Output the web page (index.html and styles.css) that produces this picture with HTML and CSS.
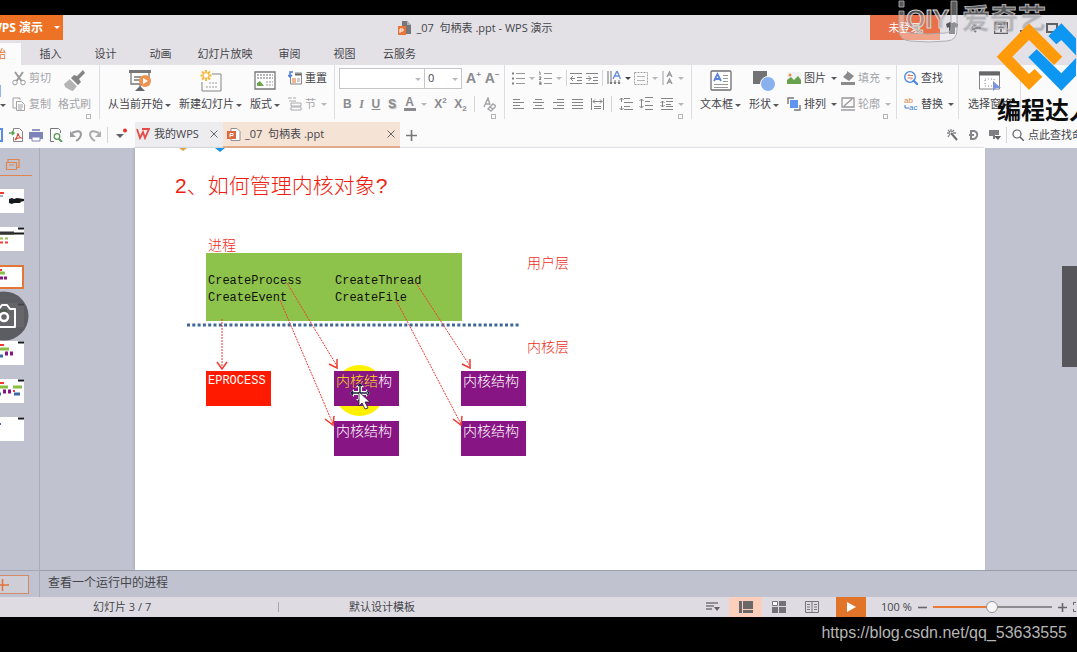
FILE: index.html
```html
<!DOCTYPE html>
<html lang="zh-CN">
<head>
<meta charset="utf-8">
<title>_07 句柄表 .ppt - WPS 演示</title>
<link rel="stylesheet" href="styles.css">
</head>
<body>
<header class="titlebar">
  <button class="brand"><span>WPS 演示</span><i class="caret"></i></button>
  <div class="doc-title">
    <svg width="13" height="14" viewBox="0 0 13 14"><path d="M4 0h5l4 4v9H6V5H4z" fill="#77767b"/><path d="M9 0v4h4z" fill="#b5b4b8"/><rect y="5" width="8" height="9" fill="#e8743a"/><path d="M2 12V8h3v2H2" fill="none" stroke="#fff"/></svg>
    <span>_07&nbsp; 句柄表 .ppt - WPS 演示</span>
  </div>
  <div class="window-tools">
    <button class="login">未登录</button>
    <button class="tool" aria-label="皮肤"><svg width="12" height="12" viewBox="0 0 12 12"><path d="M0 2l4-2q2 2 4 0l4 2-1 4-2-1v7H3V5L1 6z" fill="#55565a"/></svg></button>
    <button class="tool" aria-label="反馈"><svg width="12" height="12" viewBox="0 0 12 12"><path d="M11 6H3M6 2L2 6l4 4" fill="none" stroke="#77777c" stroke-width="2"/></svg></button>
    <button class="tool" aria-label="功能区"><svg width="14" height="12" viewBox="0 0 14 12"><path d="M.5.500h13v11H.5zM0 2h14M7 10V4M4 7l3-3 3 3" fill="none" stroke="#606065" stroke-width="1.500"/></svg></button>
    <button class="tool" aria-label="最小化"><svg width="14" height="12" viewBox="0 0 14 12"><path d="M0 9h11" stroke="#606065" stroke-width="2"/></svg></button>
    <button class="tool" aria-label="还原"><svg width="12" height="12" viewBox="0 0 12 12"><path d="M1 2h10v8H1z" fill="none" stroke="#606065" stroke-width="2"/></svg></button>
  </div>
</header>
<nav class="menu-tabs">
  <button class="menu active">开始</button>
  <button class="menu">插入</button>
  <button class="menu">设计</button>
  <button class="menu">动画</button>
  <button class="menu wide">幻灯片放映</button>
  <button class="menu">审阅</button>
  <button class="menu">视图</button>
  <button class="menu">云服务</button>
</nav>

<section class="ribbon">
  <div class="group clipboard">
    <button class="paste" aria-label="粘贴"><svg width="2" height="12"><rect y="0" width="1" height="12" fill="#8fb6f0"/></svg><i class="caret"></i></button>
    <div class="stack">
      <button class="small dim"><svg width="14" height="15" viewBox="0 0 14 15"><g fill="none" stroke="#9b9b9e"><path d="M3 1l6.500 9M11 1L4.500 10" stroke-width="2"/><circle cx="3" cy="11.500" r="2.300"/><circle cx="11" cy="11.500" r="2.300"/></g></svg><span>剪切</span></button>
      <button class="small dim"><svg width="14" height="15" viewBox="0 0 14 15"><path d="M4 11H1V1h7v2M4.500 4.500h5l3 3v6h-8zM6 8h5M6 10h5M6 12h4" fill="none" stroke="#a3a3a6"/></svg><span>复制</span></button>
    </div>
    <button class="large dim"><svg width="22" height="22" viewBox="0 0 22 22"><path d="M19 0l2 3-6 6 2 3-3 3-7-7 3-3 3 1z" fill="#858585"/><path d="M6 9l7 7-4 5-3-1-5-3-1-3z" fill="#b4b4b5"/><path d="M6 9l7 7" stroke="#f5f5f5"/></svg><span>格式刷</span></button>
    <i class="launcher"></i>
  </div>
  <div class="group slides">
    <button class="large"><svg width="22" height="22" viewBox="0 0 22 22"><path d="M0 1.500h22" stroke="#77777a" stroke-width="3"/><path d="M2 3v11h18V3M5 7h8M5 10h6M11 14v4" fill="none" stroke="#77777a" stroke-width="1.300"/><path d="M11 16l5 5H6z" fill="#66666a"/><circle cx="16" cy="11" r="6" fill="#f0924f"/><path d="M14 8v6l5-3z" fill="#fff"/></svg><span>从当前开始<i class="caret"></i></span></button>
    <button class="large"><svg width="22" height="22" viewBox="0 0 22 22"><path d="M12 4h9v17H2v-9" fill="none" stroke="#858588"/><path d="M9 13h9M6 17h11" stroke="#9c9ca0" stroke-dasharray="2 1"/><path d="M6 0v11M.500 5.500h11M2 1.500l8 8M10 1.500l-8 8" stroke="#f5b83d" stroke-width="2"/><circle cx="6" cy="5.500" r="2.300" fill="#fff"/></svg><span>新建幻灯片<i class="caret"></i></span></button>
    <button class="large"><svg width="22" height="22" viewBox="0 0 22 22"><path d="M1 2h20v17H1z" fill="#fff" stroke="#77777a" stroke-width="1.300"/><path d="M3 5h16M3 8h16" stroke="#b5b5b8" stroke-width="2" stroke-dasharray="2 1"/><path d="M3 16v-3l3-2 4 5z" fill="#69a64d"/><path d="M12 12h7M12 15h7" stroke="#909095" stroke-dasharray="2 1"/></svg><span>版式<i class="caret"></i></span></button>
    <div class="stack">
      <button class="small"><svg width="14" height="14" viewBox="0 0 14 14"><path d="M2.500 5v8h11V2H7" fill="#fff" stroke="#85858a"/><path d="M7 3.500h6" stroke="#666" stroke-width="2"/><path d="M4 7h4v5H4z" fill="#f1b68f"/><path d="M9 8h3M9 10h3" stroke="#999"/><path d="M5 1H2v5M0 4l2 2 2-2" fill="none" stroke="#4d7edb" stroke-width="1.500"/></svg><span>重置</span></button>
      <button class="small dim"><svg width="14" height="14" viewBox="0 0 14 14"><path d="M0 1h4M5 1h3M1 4h7M3 6h10v3H3zM3 10h10v3H3z" fill="none" stroke="#aaaaad"/></svg><span>节</span><i class="caret"></i></button>
    </div>
  </div>
  <div class="group font">
    <div class="row combos">
      <label class="combo family"><select aria-label="字体"><option></option></select><i class="caret"></i></label>
      <label class="combo size"><select aria-label="字号"><option>0</option></select><i class="caret"></i></label>
      <button class="glyph grow" aria-label="增大字号">A<sup>+</sup></button>
      <button class="glyph grow" aria-label="减小字号">A<sup>−</sup></button>
    </div>
    <div class="row spread">
      <button class="glyph">B</button><button class="glyph italic">I</button><button class="glyph under">U</button><button class="glyph shade">S</button>
      <button class="glyph color"><span>A</span><i class="caret"></i></button>
      <button class="glyph">X<sup>2</sup></button><button class="glyph">X<sub>2</sub></button><i class="sep"></i>
      <button class="glyph" aria-label="清除格式"><svg width="13" height="15" viewBox="0 0 13 15"><path d="M1 10L5 1l2 7M2 7h5M5 12l5-5 3 2-5 5-3-2zM7 10l3 2" fill="none" stroke="#a5a5a8" stroke-width="1.400"/></svg></button>
    </div>
    <i class="launcher"></i>
  </div>
  <div class="group para">
    <div class="row spread">
      <button class="ico" aria-label="项目符号"><svg width="13" height="14" viewBox="0 0 13 14"><path d="M4 2.500h9M4 7.500h9M4 12.500h9" stroke="#98989b"/><path d="M0 2.500h2M0 7.500h2M0 12.500h2" stroke="#808083" stroke-width="2"/></svg><i class="caret pale"></i></button>
      <button class="ico" aria-label="编号"><svg width="13" height="14" viewBox="0 0 13 14"><path d="M5 2.500h8M5 7.500h8M5 12.500h8" stroke="#98989b"/><path d="M0 1h1v3M0 6h2v1L0 8.500h2M0 11h2v3H0M0 12.500h2" fill="none" stroke="#808083"/></svg><i class="caret pale"></i></button>
      <i class="sep"></i>
      <button class="ico" aria-label="减少缩进"><svg width="12" height="13" viewBox="0 0 12 13"><path d="M0 1.500h12M0 11.500h12M7 5.500h5M7 8.500h5M0 6.500h5M3 4L.500 6.500 3 9" fill="none" stroke="#858588"/></svg></button>
      <button class="ico" aria-label="增加缩进"><svg width="12" height="13" viewBox="0 0 12 13"><path d="M0 1.500h12M0 11.500h12M7 5.500h5M7 8.500h5M0 6.500h5M2.500 4L5 6.500 2.500 9" fill="none" stroke="#858588"/></svg></button>
      <i class="sep"></i>
      <button class="ico" aria-label="文字方向"><svg width="14" height="14" viewBox="0 0 14 14"><path d="M1 0v13M4 0v13M8 9v4M12 9v4" stroke="#6f6f73"/><path d="M3 11l1 2 1-2M7 11l1 2 1-2M11 11l1 2 1-2" fill="none" stroke="#6f6f73"/><path d="M6 8l4-8 3.500 8M7.500 5h5" fill="none" stroke="#6a8fe0" stroke-width="1.400"/></svg><i class="caret dark"></i></button>
      <button class="ico" aria-label="对齐文本"><svg width="14" height="13" viewBox="0 0 14 13"><path d="M.5.500h13v12H.5z" fill="none" stroke="#a0a0a3" stroke-dasharray="2 1"/><path d="M3 4.500h8M3 8.500h8" stroke="#b5b5b8"/></svg><i class="caret pale"></i></button>
      <button class="ico" aria-label="竖排"><svg width="12" height="14" viewBox="0 0 12 14"><path d="M1 0v14" stroke="#a0a0a3"/><path d="M5 6l2.500-5L10 6M6 4h3M5 13l2.500-5L10 13M6 11h3" fill="none" stroke="#98989b" stroke-width="1.300"/></svg><i class="caret pale"></i></button>
    </div>
    <div class="row spread">
      <button class="ico" aria-label="左对齐"><svg width="13" height="12" viewBox="0 0 13 12"><path d="M1 1.500h7M1 4.500h11M1 7.500h7M1 10.500h11" stroke="#858588"/></svg></button>
      <button class="ico" aria-label="居中"><svg width="13" height="12" viewBox="0 0 13 12"><path d="M3 1.500h7M1 4.500h11M3 7.500h7M1 10.500h11" stroke="#858588"/></svg></button>
      <button class="ico" aria-label="右对齐"><svg width="13" height="12" viewBox="0 0 13 12"><path d="M5 1.500h7M1 4.500h11M5 7.500h7M1 10.500h11" stroke="#858588"/></svg></button>
      <button class="ico" aria-label="两端对齐"><svg width="13" height="12" viewBox="0 0 13 12"><path d="M1 1.500h11M1 4.500h11M1 7.500h11M1 10.500h11" stroke="#858588"/></svg></button>
      <button class="ico" aria-label="分散对齐"><svg width="13" height="12" viewBox="0 0 13 12"><path d="M.5 0v12M12.500 0v12M2 3.500h9M4 1.500l-2 2 2 2M9 1.500l2 2-2 2M3 8.500h7M3 10.500h7" fill="none" stroke="#858588"/></svg></button>
      <i class="sep"></i>
      <button class="ico" aria-label="行距"><svg width="14" height="14" viewBox="0 0 14 14"><path d="M5 1.500h6M5 5.500h9M5 9.500h6M5 12.500h9M2.500 1v4M.500 3l2-2 2 2M2.500 9v4M.500 11l2 2 2-2" fill="none" stroke="#858588"/></svg></button>
      <button class="ico" aria-label="段距"><svg width="14" height="14" viewBox="0 0 14 14"><path d="M6 .500h8M6 4.500h5M6 8.500h8M6 12.500h8M2.500 2v9M.500 4l2-2 2 2M.500 9l2 2 2-2" fill="none" stroke="#858588"/></svg></button>
      <button class="ico" aria-label="行高"><svg width="14" height="14" viewBox="0 0 14 14"><path d="M1 1.500h12M6 4.500h7M6 7.500h5M6 9.500h7M1 12.500h12M2.500 4v6M.500 6l2-2 2 2M.500 8l2 2 2-2" fill="none" stroke="#858588"/></svg><i class="caret pale"></i></button>
    </div>
    <i class="launcher"></i>
  </div>
  <div class="group draw">
    <button class="large"><svg width="22" height="22" viewBox="0 0 22 22"><rect x="1" y="1" width="20" height="19" rx="1" fill="#fff" stroke="#6f6f73" stroke-width="1.300"/><path d="M4 11L7.500 4 11 11M5.500 9h4" fill="none" stroke="#5a86e0" stroke-width="1.800"/><path d="M13 5.500h5M13 8.500h5M13 11.500h5M4 14.500h14M4 17.500h14" stroke="#98989b"/></svg><span>文本框<i class="caret"></i></span></button>
    <button class="large"><svg width="22" height="22" viewBox="0 0 22 22"><path d="M0 1h14v13H0z" fill="#737376"/><circle cx="15" cy="14" r="7.500" fill="#8bb0ee" stroke="#fff"/></svg><span>形状<i class="caret"></i></span></button>
    <div class="stack">
      <button class="small"><svg width="14" height="14" viewBox="0 0 14 14"><path d="M0 1h14v12H0z" fill="#f0f2f4"/><circle cx="3" cy="4" r="1.500" fill="#ee8b4a"/><path d="M0 13V9l4-3 3 3 4-4 3 4v4z" fill="#69a24c"/></svg><span>图片</span><i class="caret"></i></button>
      <button class="small"><svg width="14" height="14" viewBox="0 0 14 14"><path d="M1 7V1h6M13 8v5H7" fill="none" stroke="#77777a" stroke-width="1.400"/><path d="M3 3h8v8H3z" fill="#5f93f0"/></svg><span>排列</span><i class="caret"></i></button>
    </div>
    <div class="stack">
      <button class="small dim"><svg width="14" height="14" viewBox="0 0 14 14"><path d="M6 0l7 5-5 5-6-4 4-4z" fill="#8b8b8e"/><path d="M0 11h14v3H0z" fill="#8b8b8e"/></svg><span>填充</span><i class="caret"></i></button>
      <button class="small dim"><svg width="14" height="14" viewBox="0 0 14 14"><path d="M1 1h12v9H1zM3 9l8-7" fill="none" stroke="#98989b" stroke-width="1.300"/><path d="M0 13h14" stroke="#b5b5b8" stroke-width="2"/></svg><span>轮廓</span><i class="caret"></i></button>
    </div>
    <i class="launcher"></i>
  </div>
  <div class="group find">
    <div class="stack">
      <button class="small"><svg width="14" height="14" viewBox="0 0 14 14"><circle cx="6" cy="6" r="5.300" fill="none" stroke="#4484dc" stroke-width="1.300"/><path d="M9 4.500H4l1.500-1.500M3.500 7h5L7 8.500" fill="none" stroke="#d97d5f"/><path d="M9 9l5 5" stroke="#4484dc" stroke-width="2"/></svg><span>查找</span></button>
      <button class="small"><svg width="14" height="14" viewBox="0 0 14 14"><text x="0" y="6" class="ab">ab</text><text x="5" y="13" class="ac">ac</text><path d="M1 8v3h4" fill="none" stroke="#3d7ed6"/></svg><span>替换</span><i class="caret"></i></button>
    </div>
  </div>
  <div class="group select">
    <button class="large"><svg width="22" height="22" viewBox="0 0 22 22"><path d="M.500 2h20v17H.500z" fill="#fff" stroke="#858588"/><path d="M0 3.500h21" stroke="#666669" stroke-width="4"/><path d="M6 9h9v7H6z" fill="none" stroke="#88888b" stroke-dasharray="1 2"/><path d="M14 11v10l3-3h5z" fill="#7d93e0"/></svg><span>选择窗格</span></button>
  </div>
</section>

<section class="docbar">
  <div class="quick">
    <button class="ico save" aria-label="保存"><svg width="14" height="14" viewBox="0 0 14 14"><path d="M1 1h12v12H1zM4 1v4h6V1" fill="none" stroke="#5c8be6" stroke-width="2"/></svg></button>
    <button class="ico" aria-label="输出PDF"><svg width="14" height="14" viewBox="0 0 14 14"><path d="M4.500 3V.500h6l3 3v10h-9V9" fill="none" stroke="#85858a"/><path d="M0 5h4M3 3l2 2-2 2" fill="none" stroke="#56a35c" stroke-width="1.500"/><path d="M6 12q3-4 3-7 1 5 4 5-4-1-7 2" fill="none" stroke="#d94b3d" stroke-width="1.200"/></svg></button>
    <button class="ico" aria-label="打印"><svg width="14" height="14" viewBox="0 0 14 14"><path d="M3 1h8v2H3z" fill="#9298bd"/><path d="M0 4h14v7H0z" fill="#7e84b8"/><path d="M3 9h8v4H3z" fill="#fff" stroke="#7e84b8"/></svg></button>
    <button class="ico" aria-label="打印预览"><svg width="14" height="14" viewBox="0 0 14 14"><path d="M5 13.500H1.500V.500h8l2 2V5" fill="none" stroke="#77777a"/><circle cx="8" cy="8.500" r="2.800" fill="none" stroke="#5b9b5d" stroke-width="1.300"/><path d="M10 11l3 3" stroke="#5b9b5d" stroke-width="2"/></svg></button>
    <button class="ico" aria-label="撤销"><svg width="14" height="14" viewBox="0 0 14 14"><path d="M3 5q8-4 9 1 0 4-5 7" fill="none" stroke="#9b9b9f" stroke-width="2"/><path d="M1 3v6h6z" fill="#9b9b9f"/></svg></button>
    <button class="ico" aria-label="恢复"><svg width="14" height="14" viewBox="0 0 14 14"><path d="M10 5Q2 1 1 6q0 4 5 7" fill="none" stroke="#adadb0" stroke-width="2"/><path d="M12 3v6H6z" fill="#adadb0"/></svg></button>
    <i class="sep"></i>
    <button class="ico" aria-label="更多"><svg width="14" height="14" viewBox="0 0 14 14"><path d="M2 6h8l-4 4z" fill="#606065"/><circle cx="11" cy="2.500" r="2" fill="#f02f24"/></svg></button>
  </div>
  <div class="doc-tab home">
    <svg width="14" height="12" viewBox="0 0 14 12"><path d="M1 1l3 9 3-6 2 6 4-9H6" fill="none" stroke="#e64b45" stroke-width="1.800"/></svg>
    <span>我的WPS</span>
    <button class="close" aria-label="关闭"><svg width="8" height="8" viewBox="0 0 8 8"><path d="M.5.500l7 7M7.500.500l-7 7" stroke="#66666a"/></svg></button>
  </div>
  <div class="doc-tab current">
    <svg width="14" height="13" viewBox="0 0 14 13"><path d="M4 .500h6l3 3v9H4z" fill="#fff" stroke="#929296"/><rect y="3" width="9" height="8" fill="#dd6743"/><path d="M3 9.500v-4h3v2H3M10 6h2M10 8h2" fill="none" stroke="#fff"/></svg>
    <span>_07&nbsp; 句柄表 .ppt</span>
    <button class="close" aria-label="关闭"><svg width="8" height="8" viewBox="0 0 8 8"><path d="M.5.500l7 7M7.500.500l-7 7" stroke="#66666a"/></svg></button>
  </div>
  <button class="ico add-tab" aria-label="新建"><svg width="11" height="11" viewBox="0 0 11 11"><path d="M5.500 0v11M0 5.500h11" stroke="#77777a" stroke-width="1.600"/></svg></button>
  <div class="doc-tools">
    <button class="ico" aria-label="工具"><svg width="11" height="12" viewBox="0 0 11 12"><path d="M4 4l6 7" stroke="#6f6f73" stroke-width="2"/><path d="M4 0v3M0 4h3M1 1l2 2M7 1L5 3M1 8l2-3M6 4h3" stroke="#85858a" stroke-width="1.300"/></svg></button>
    <button class="ico" aria-label="文档"><svg width="11" height="12" viewBox="0 0 11 12"><path d="M3 2h3q4 1 3 5-1 3-4 3H3zM1 6h5" fill="none" stroke="#85858a" stroke-width="2"/></svg></button>
    <button class="ico" aria-label="视图"><svg width="12" height="12" viewBox="0 0 12 12"><path d="M0 1h10v5H6v4H4V7H0z" fill="#808084"/><path d="M5 7h7l-3 4z" fill="#606065"/></svg></button>
    <i class="sep"></i>
    <label class="search"><svg width="12" height="12" viewBox="0 0 12 12"><circle cx="5" cy="5" r="4" fill="none" stroke="#606065" stroke-width="1.200"/><path d="M8 8l4 4" stroke="#606065" stroke-width="1.400"/></svg><input type="text" placeholder="点此查找命令" aria-label="查找命令"></label>
  </div>
</section>

<main class="workspace">
  <aside class="outline">
    <div class="outline-head"><svg width="20" height="12" viewBox="0 0 20 12"><path d="M6.500 3.500h10v7h-10zM8 3V.500h11v8h-2M9 6h5" fill="none" stroke="#e0854e" stroke-width="1.200"/></svg></div>
    <div class="thumbs">
      <button class="thumb" aria-label="幻灯片 1"><svg width="24" height="24" viewBox="0 0 24 24"><path d="M0 4h4" stroke="#f03a30" stroke-width="2"/><path d="M0 7h3" stroke="#9fb0cc" stroke-width="2"/><path d="M9 10l3-1 2 1 3-1 7 1v2l-4 1 1 1h-7l-2 1-3-1z" fill="#15191b"/></svg></button>
      <button class="thumb" aria-label="幻灯片 2"><svg width="24" height="24" viewBox="0 0 24 24"><path d="M18 1.500h6M0 6.500h24" stroke="#15191b" stroke-width="2"/><path d="M0 6h14" stroke="#333" stroke-width="3"/><path d="M0 11.500h9" stroke="#95bd52" stroke-width="2" stroke-dasharray="3 2"/><path d="M0 15.500h9" stroke="#ef4036" stroke-width="2" stroke-dasharray="3 2"/></svg></button>
      <button class="thumb chosen" aria-label="幻灯片 3"><svg width="24" height="24" viewBox="0 0 24 24"><path d="M0 3h2" stroke="#f03a30" stroke-width="2"/><path d="M0 6h5" stroke="#89bd43" stroke-width="3"/><path d="M0 11h7" stroke="#871583" stroke-width="3" stroke-dasharray="3 1"/></svg></button>
      <button class="thumb" aria-label="幻灯片 4"><svg width="24" height="24" viewBox="0 0 24 24"><path d="M18 1.500h6" stroke="#15191b" stroke-width="2"/><path d="M0 8h7" stroke="#89bd43" stroke-width="3"/></svg></button>
      <button class="thumb" aria-label="幻灯片 5"><svg width="24" height="24" viewBox="0 0 24 24"><path d="M18 1.500h6" stroke="#15191b" stroke-width="2"/><path d="M0 4h4" stroke="#f03a30" stroke-width="2"/><path d="M0 8h9" stroke="#89bd43" stroke-width="3"/><path d="M5 12.500h8" stroke="#871583" stroke-width="4" stroke-dasharray="3 2"/><path d="M0 15h3" stroke="#3c6aa2" stroke-width="3"/></svg></button>
      <button class="thumb" aria-label="幻灯片 6"><svg width="24" height="24" viewBox="0 0 24 24"><path d="M18 1.500h6" stroke="#15191b" stroke-width="2"/><path d="M0 4h4" stroke="#f03a30" stroke-width="2"/><path d="M0 8h8M13 8h9" stroke="#89bd43" stroke-width="3"/><path d="M3 12.500h8" stroke="#871583" stroke-width="4" stroke-dasharray="3 2"/><path d="M13 12h2" stroke="#ef4036" stroke-width="2"/><path d="M0 15h1M14 15h6" stroke="#3c6aa2" stroke-width="3"/></svg></button>
      <button class="thumb" aria-label="幻灯片 7"><svg width="24" height="24" viewBox="0 0 24 24"><path d="M18 1.500h6" stroke="#15191b" stroke-width="2"/><path d="M0 7h1" stroke="#3c6aa2" stroke-width="2"/></svg></button>
    </div>
    <div class="outline-foot"><button class="add-slide" aria-label="新建幻灯片"><svg width="9" height="12" viewBox="0 0 9 12"><path d="M2.500 0v12M0 6h9" stroke="#e0743a" stroke-width="1.500"/></svg></button></div>
    <svg class="camera" width="29" height="50" viewBox="0 0 29 50"><circle cx="4" cy="25" r="24.500" fill="#4a4a50" fill-opacity=".85"/><path d="M-6 18h5l3-4h5l3 4h5v18H-6z" fill="none" stroke="#fff" stroke-width="2" stroke-linejoin="round"/><circle cx="4" cy="26" r="4" fill="none" stroke="#fff" stroke-width="2.500"/></svg>
  </aside>
  <section class="editor">
    <div class="stage">
      <article class="slide">
        <svg class="wires" width="850" height="422" viewBox="0 0 850 422">
          <path d="M44 0h8l-4 3z" fill="#e7a040"/><path d="M80 0h10l-5 4z" fill="#1994e2"/>
        </svg>
        <h1 class="node heading">2、如何管理内核对象?</h1>
        <div class="node proc-label">进程</div>
        <div class="node process"><p>CreateProcess</p><p>CreateThread</p><p>CreateEvent</p><p>CreateFile</p></div>
        <div class="node user-layer">用户层</div>
        <div class="node kernel-layer">内核层</div>
        <div class="node spot"></div>
        <div class="node box eprocess">EPROCESS</div>
        <div class="node box k1"><em>内核结</em>构</div>
        <div class="node box k2">内核结构</div>
        <div class="node box k3">内核结构</div>
        <div class="node box k4">内核结构</div>
        <svg class="wires" width="850" height="422" viewBox="0 0 850 422">
          <path d="M52 177h333" stroke="#3f6794" stroke-width="3" stroke-dasharray="3 2.300"/>
          <g fill="none" stroke="#ef3b32" stroke-dasharray="2 1"><path d="M87 171v47M152 135l50 83M145 152l53 124M281 135l54 83M261 152l65 124"/></g>
          <g fill="none" stroke="#ef3b32" stroke-width="1.500"><path d="M82 214l5 7 5-7M194 216l8 4v-9M190 271l8 6 1-9M327 216l8 4v-9M318 271l8 6 1-9"/></g>
          <path d="M225 235l4 4h-2v4h4v-2l4 4-4 4v-2h-4v4h2l-4 4-4-4h2v-4h-4v2l-4-4 4-4v2h4v-4h-2z" fill="#fff"/>
          <path d="M225 237v15M217 245h15M223 238l2-2 2 2M223 252l2 2 2-2M218 243l-2 2 2 2M232 243l2 2-2 2" fill="none" stroke="#17203a" stroke-width="1.400"/>
          <path d="M224 244v14l3-3 3 6 3-1-3-6h5z" fill="#fff" stroke="#222" stroke-width=".8"/>
        </svg>
      </article>
      <i class="scroll-thumb"></i>
    </div>
    <div class="notes">查看一个运行中的进程</div>
  </section>
</main>

<footer class="status">
  <span class="page-no">幻灯片 3 / 7</span><i class="sep"></i><span class="template">默认设计模板</span>
  <div class="views">
    <button class="view" aria-label="备注"><svg width="14" height="12" viewBox="0 0 14 12"><path d="M0 2h12M0 5h8M0 8h6" stroke="#77777a" stroke-width="1.400"/><path d="M8 6h6l-3 4z" fill="#606065"/></svg></button>
    <button class="view on" aria-label="普通视图"><svg width="14" height="12" viewBox="0 0 14 12"><path d="M0 0h3v12H0zM4 0h10v8H4zM4 9h10v3H4z" fill="#6b6768"/></svg></button>
    <button class="view" aria-label="浏览视图"><svg width="14" height="12" viewBox="0 0 14 12"><path d="M.5.500h5v4h-5z" fill="#fff" stroke="#737377"/><path d="M7 0h7v5H7zM0 6h6v6H0zM7 6h7v6H7z" fill="#737377"/></svg></button>
    <button class="view" aria-label="阅读视图"><svg width="14" height="12" viewBox="0 0 14 12"><path d="M.5.500h13v11H.5zM7 0v12M2 3.500h3M2 6h3M2 8.500h3M9 3.500h3M9 6h3M9 8.500h3" fill="none" stroke="#77777a"/></svg></button>
  </div>
  <button class="play" aria-label="放映"><svg width="10" height="12" viewBox="0 0 10 12"><path d="M1 1v10l9-5z" fill="#fff"/></svg></button>
  <div class="zoom">
    <label for="zoom">100 %</label>
    <button class="ico" aria-label="缩小"><svg width="9" height="9"><path d="M0 4.500h9" stroke="#66666a" stroke-width="1.600"/></svg></button>
    <input id="zoom" type="range" value="50">
    <button class="ico" aria-label="放大"><svg width="9" height="9"><path d="M0 4.500h9M4.500 0v9" stroke="#66666a" stroke-width="1.600"/></svg></button>
    <button class="ico fit" aria-label="适应窗口"><svg width="10" height="10"><path d="M3 .500H.500V3M.500 7v2.500H3" fill="none" stroke="#66666a"/></svg></button>
  </div>
</footer>
<div class="credit"><a href="#">https://blog.csdn.net/qq_53633555</a></div>

<div class="qiyi">
  <svg width="62" height="46" viewBox="0 0 62 46"><path d="M2 1h5v6H2zM2 11v19q0 10 11 11 18 2 37 0 10-1 10-11V1h-6v26q0 6-6 6-17 2-35 0-6 0-6-6V11z" fill="#fff" fill-opacity=".35" stroke="#a9a9ad" stroke-opacity=".9"/><text x="9" y="28" class="qiyi-mark">QIY</text></svg>
  <span>爱奇艺</span>
</div>
<div class="academy">
  <svg width="81" height="70" viewBox="0 0 243 210"><path d="M102 4L5 104l97 100 40-40-23-23-17 15-50-52 50-50 75 75 25-25z" fill="#ff9a0a"/><path d="M199 4l-39 38 24 25 15-13 48 50-48 50-74-72-25 24 99 100 98-100z" fill="#0d96f2"/></svg>
  <span>编程达人</span>
</div>
</body>
</html>
```
FILE: styles.css
```css
* { box-sizing: border-box; }
body {
  margin: 0;
  padding-top: 15px;
  min-height: 100vh;
  display: flex;
  flex-direction: column;
  position: relative;
  overflow: hidden;
  background: #000;
  color: #45454a;
  font: 11px/16px "Open Sans", "Noto Sans CJK SC", sans-serif;
}
button, input, select { font: inherit; color: inherit; }
button { border: 0; padding: 0; background: none; white-space: nowrap; }
svg { display: block; flex: none; }
.caret {
  flex: none;
  display: inline-block;
  border: 3px solid transparent;
  border-top-color: #58585c;
  border-bottom-width: 0;
}
.caret.pale { border-top-color: #b8b8bb; }
.caret.dark { border-top-color: #444; }
.sep { flex: none; width: 1px; height: 16px; background: #d5d5d9; }
.ico { display: flex; align-items: center; gap: 4px; }

/* title bar */
.titlebar { display: flex; height: 25px; background: #e3e1e6; }
.brand {
  width: 63px;
  display: flex;
  align-items: center;
  justify-content: flex-end;
  gap: 11px;
  padding-right: 3px;
  overflow: hidden;
  background: #ed7226;
  color: #fff;
  font-size: 12px;
  font-weight: bold;
}
.brand .caret { border-top-color: #fff; }
.doc-title { flex: 1; display: flex; align-items: center; justify-content: center; gap: 5px; padding-left: 18px; }
.window-tools { display: flex; width: 207px; gap: 12px; }
.login { width: 70px; margin-right: -6px; background: #e9714a; color: #fff; }
.tool { display: flex; align-items: center; }

/* menu */
.menu-tabs { display: flex; height: 25px; padding-top: 3px; background: #e3e1e6; }
.menu { width: 55px; }
.menu.wide { width: 74px; }
.menu.active {
  width: 21px;
  margin-right: 2px;
  padding-right: 15px;
  display: flex;
  align-items: center;
  justify-content: flex-end;
  overflow: hidden;
  background: #fbfbfc;
  color: #e0702c;
}

/* ribbon */
.ribbon { display: flex; height: 57px; background: #fbfbfc; overflow: hidden; }
.group { position: relative; display: flex; flex: none; height: 54px; border-right: 1px solid #dedee2; }
.launcher { position: absolute; right: 8px; bottom: 0; width: 5px; height: 5px; border: 1px solid #b5b5b8; }
.stack { display: grid; grid-template-rows: 26px 26px; }
.small { display: flex; align-items: center; gap: 3px; }
.small .caret { margin-left: 2px; }
.large { display: flex; flex-direction: column; align-items: center; padding-top: 5px; gap: 4px; }
.large .caret { margin-left: 2px; vertical-align: middle; }
.dim { color: #a5a5a8; }
.dim .caret { border-top-color: #b8b8bb; }
.clipboard { width: 100px; gap: 7px; }
.paste { width: 5px; display: flex; flex-direction: column; justify-content: space-between; padding: 20px 0 12px; }
.slides { width: 235px; padding-left: 8px; gap: 8px; }
.font { width: 170px; flex-direction: column; padding: 0 4px; }
.row { display: flex; align-items: center; height: 26px; }
.spread { justify-content: space-between; }
.combo { flex: none; position: relative; height: 21px; border: 1px solid #c5c5ca; background: #fff; }
.combo + .combo { margin-left: -1px; }
.combo select { display: block; width: 100%; height: 100%; padding: 0 3px; border: 0; background: none; appearance: none; }
.combo .caret { position: absolute; right: 3px; top: 9px; border-top-color: #b8b8bb; }
.family { width: 86px; }
.size { width: 38px; }
.glyph { font: bold 12px/16px "Liberation Sans", sans-serif; color: #8b8b8f; }
.glyph sup, .glyph sub { font-size: 8px; line-height: 0; }
.font .spread { padding: 0 4px; }
.grow { margin-left: 4px; font-size: 14px; }
.italic { font-family: "Liberation Serif", serif; font-style: italic; }
.under { text-decoration: underline; }
.shade { text-shadow: 1px 1px 1px #aaa; }
.color { display: flex; align-items: center; gap: 5px; }
.color span { width: 12px; border-bottom: 3px solid #8b8b8f; line-height: 11px; }
.color .caret { border-top-color: #b8b8bb; }
.para { width: 187px; flex-direction: column; padding: 0 7px; }
.draw { width: 205px; padding-left: 8px; gap: 8px; }
.draw .stack + .stack { margin-left: -4px; }
.find { width: 62px; padding-left: 7px; }
.select { width: 62px; padding-left: 9px; }
.ab, .ac { font: 8px "Liberation Sans", sans-serif; fill: #d98547; }
.ac { fill: #3d7ed6; }

/* document tabs */
.docbar { display: flex; height: 26px; background: #fbfbfc; overflow: hidden; }
.quick { width: 135px; display: flex; align-items: center; gap: 6px; }
.save { width: 3px; justify-content: flex-end; overflow: hidden; }
.quick .sep { margin-left: -2px; }
.doc-tab { display: flex; align-items: center; gap: 4px; border-bottom: 2px solid transparent; }
.home { width: 88px; padding: 0 5px 0 1px; background: #ededf0; }
.current { width: 177px; padding: 0 5px 0 4px; background: #f5e3d5; border-color: #ecab7f; }
.close { margin-left: auto; }
.add-tab { margin-left: 6px; }
.doc-tools { margin-left: auto; width: 130px; display: flex; align-items: center; gap: 10px; }
.doc-tools .sep { margin: 0 -5px; }
.search { display: flex; align-items: center; gap: 4px; }
.search input { width: 80px; border: 0; padding: 0; background: none; }
.search input::placeholder { color: #45454a; opacity: 1; }

/* workspace */
.workspace { flex: 1; display: flex; background: #c0c2cf; }
.outline { position: relative; width: 40px; display: flex; flex-direction: column; border-right: 1px solid #a9abb9; }
.outline-head { width: 32px; height: 28px; padding-top: 11px; border-bottom: 1px solid #e0854e; }
.thumbs { flex: 1; display: flex; flex-direction: column; align-items: flex-start; gap: 14px; padding-top: 13px; }
.thumb { width: 24px; height: 24px; background: #fff; overflow: hidden; }
.chosen { border: 2px solid #e27735; border-left: 0; }
.outline-foot { height: 27px; padding-top: 4px; border-top: 1px solid #a5a7b3; }
.add-slide { width: 29px; height: 19px; border: 1px solid #d38b67; border-left: 0; background: #cfced6; }
.camera { position: absolute; left: 0; top: 143px; }
.editor { flex: 1; display: flex; flex-direction: column; }
.stage { flex: 1; display: flex; position: relative; padding: 0 92px 0 95px; }
.scroll-thumb { position: absolute; right: 0; top: 118px; width: 15px; height: 101px; background: #57575b; }
.notes { height: 27px; padding: 4px 8px; border-top: 1px solid #9a9ca9; font-size: 12px; }

/* slide canvas */
.slide { flex: 1; position: relative; background: #fff; overflow: hidden; box-shadow: -1px 0 2px #a9abba; font-weight: 300; }
.node { position: absolute; margin: 0; }
.wires { position: absolute; left: 0; top: 0; }
.heading { left: 40px; top: 23px; color: #f01c10; font: 300 21px/30px "Liberation Sans", "Noto Sans CJK SC", sans-serif; }
.proc-label, .user-layer, .kernel-layer { color: #ee2d22; font-size: 14px; line-height: 18px; }
.proc-label { left: 73px; top: 88px; }
.user-layer { left: 392px; top: 106px; }
.kernel-layer { left: 392px; top: 190px; }
.process {
  left: 71px;
  top: 105px;
  width: 256px;
  height: 68px;
  padding: 20px 2px;
  display: grid;
  grid-template-columns: 127px 1fr;
  grid-auto-rows: 17px;
  background: #8dc34b;
  color: #111;
  font: 12px/17px "Liberation Mono", monospace;
}
.process p { margin: 0; }
.box { width: 65px; height: 35px; padding: 1px 2px; background: #871583; color: #fff; font-size: 14px; line-height: 18px; white-space: nowrap; }
.eprocess { left: 71px; top: 223px; background: #ff1a00; font: 12px/18px "Liberation Mono", monospace; }
.k1 { left: 199px; top: 223px; }
.k2 { left: 326px; top: 223px; }
.k3 { left: 199px; top: 273px; }
.k4 { left: 326px; top: 273px; }
.k1 em { font-style: normal; color: #f7dc1c; }
.spot { left: 199px; top: 217px; width: 51px; height: 51px; border-radius: 50%; background: #fff000; }

/* status bar */
.status { display: flex; align-items: center; height: 20px; background: #dedce2; overflow: hidden; }
.page-no { width: 278px; padding-left: 93px; }
.status > .sep { height: 10px; background: #a5a5aa; }
.template { padding-left: 70px; }
.views { margin-left: auto; display: flex; height: 20px; }
.view { width: 33px; display: flex; align-items: center; justify-content: center; }
.on { background: #fbcfbb; }
.play { width: 30px; height: 20px; margin-left: 8px; display: flex; align-items: center; justify-content: center; background: #e27429; }
.zoom { width: 211px; padding-left: 15px; display: flex; align-items: center; gap: 6px; }
.zoom label { width: 32px; white-space: nowrap; }
.zoom input { flex: none; width: 119px; height: 14px; margin: 0; appearance: none; background: linear-gradient(90deg, #e97a38 50%, #8b8b90 50%) center / 100% 2px no-repeat; }
.zoom input::-webkit-slider-thumb { appearance: none; width: 12px; height: 12px; border: 1px solid #909095; border-radius: 50%; background: #f7f7f8; }
.credit { height: 35px; padding: 6px 10px; text-align: right; font: 16px/20px "Liberation Sans", sans-serif; }
.credit a { color: #b5b5b5; text-decoration: none; }

/* overlays */
.qiyi { position: absolute; right: 31px; top: 0; display: flex; gap: 3px; }
.qiyi span { font: bold 28px/34px "Noto Sans CJK SC", sans-serif; color: rgba(150, 150, 154, .6); -webkit-text-stroke: 1px rgba(205, 205, 208, .8); }
.qiyi-mark { font: bold 25px "Liberation Sans", sans-serif; fill: #99999d; fill-opacity: .5; stroke: #d5d5d8; stroke-width: 1px; }
.academy { position: absolute; right: 0; top: 22px; width: 82px; overflow: hidden; }
.academy span { display: block; padding-left: 2px; font: bold 24px/34px "Noto Sans CJK SC", sans-serif; color: #0c0c0c; white-space: nowrap; }
```
